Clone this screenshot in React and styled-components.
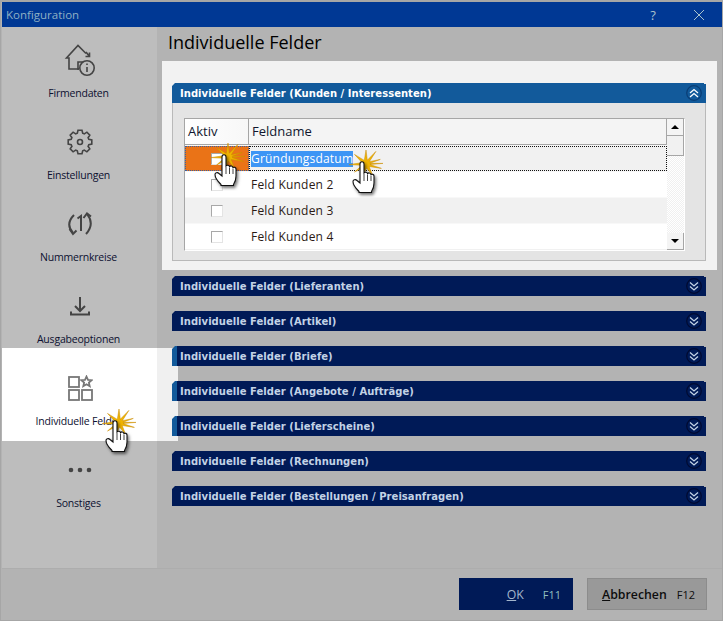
import React from "react";
import styled, { createGlobalStyle } from "styled-components";

const Global = createGlobalStyle`
    html, body { margin: 0; padding: 0; background: #b3b3b3; }
    * { box-sizing: border-box; }
`;

const Window = styled.div`
    position: relative;
    width: 723px;
    height: 621px;
    display: flex;
    flex-direction: column;
    overflow: hidden;
    background: #b3b3b3;
    border: 1px solid #a6a6a6;
    border-top-width: 2px;
    font-family: "Open Sans", "Liberation Sans", sans-serif;
`;

const TitleBar = styled.div`
    height: 25px;
    flex: none;
    margin-left: 1px;
    padding-left: 4px;
    display: flex;
    align-items: center;
    background: #003894;
    color: #8fb0c4;
    font-size: 11.5px;
`;

const TitleText = styled.span`
    flex: 1;
`;

const TitleButton = styled.span`
    width: 46px;
    display: flex;
    justify-content: center;
    color: #a9c3cc;
    font-size: 13px;
`;

const Body = styled.div`
    flex: 1;
    display: flex;
    min-height: 0;
`;

const Sidebar = styled.div`
    width: 155px;
    flex: none;
    padding-top: 1px;
    margin-left: 1px;
    background: #bdbdbd;
`;

const NavItem = styled.div`
    height: 82px;
    display: flex;
    flex-direction: column;
    align-items: center;
    color: #0c1030;
    font-size: 10.5px;
    letter-spacing: -0.2px;
`;

const NavIcon = styled.div`
    height: 40px;
    margin-top: 12px;
    display: flex;
    align-items: center;
    justify-content: center;
`;

const NavLabel = styled.div`
    margin: ${(p) => p.$top}px 2px 0 0;
    line-height: 16px;
`;

const ActiveNav = styled.div`
    position: absolute;
    left: 1px;
    top: 346px;
    width: 176px;
    height: 93px;
    background: linear-gradient(to right, #fff 155px, #f0f0f0 155px);
    display: flex;
    flex-direction: column;
    align-items: center;
    padding: 27px 21px 0 0;
    color: #0c1030;
    font-size: 10.5px;
    letter-spacing: -0.2px;
`;

const Main = styled.div`
    position: relative;
    z-index: 1;
    flex: 1;
    min-width: 0;
    padding-left: 5px;
`;

const Heading = styled.h1`
    margin: 0;
    height: 34px;
    padding: 1px 0 0 6px;
    line-height: 28px;
    font-size: 18px;
    font-weight: 400;
    color: #000;
`;

const Panel = styled.div`
    width: 555px;
    height: 209px;
    padding: 22px 11px 0 10px;
    background: #f2f2f2;
    margin-bottom: 6px;
`;

const AccordionHead = styled.div`
    height: 20px;
    padding: 0 4px 0 8px;
    display: flex;
    align-items: center;
    justify-content: space-between;
    background: ${(p) =>
        p.$open
            ? "#125a9b"
            : p.$lit
              ? "linear-gradient(to right, #125a9b 5px, #001a57 5px)"
              : "#001a57"};
    color: ${(p) => (p.$open ? "#fff" : "#c3d3e6")};
    font-family: "DejaVu Sans", Verdana, sans-serif;
    font-size: 10px;
    letter-spacing: 0.04px;
    font-weight: 700;
    clip-path: polygon(3px 0, calc(100% - 2px) 0, calc(100% - 2px) 1px, 100% 1px, 100% 100%, 0 100%, 0 3px);
`;

const Collapsed = styled.div`
    width: 534px;
    margin: 0 0 15px 10px;
`;

const AccordionBody = styled.div`
    height: 158px;
    padding: 15px 21px 0 11px;
    background: #e4e4e4;
    border: 1px solid #b9b9b9;
    border-top: 0;
`;

const Grid = styled.div`
    width: 501px;
    height: 133px;
    display: flex;
    border-top: 1px solid #a6a6a6;
    border-left: 1px solid #a6a6a6;
    border-right: 1px solid #fff;
    border-bottom: 1px solid #fff;
    background: #fff;
`;

const GridMain = styled.div`
    flex: 1;
    min-width: 0;
    display: flex;
    flex-direction: column;
    background: #f1f1f1;
`;

const HeaderRow = styled.div`
    height: 26px;
    flex: none;
    display: flex;
    align-items: center;
    background: linear-gradient(to right, #fff 0, #f4f4f4 90px);
    border-bottom: 1px solid #a6a6a6;
    border-right: 1px solid #a6a6a6;
    color: #10162e;
    font-size: 13px;
`;

const HeaderCell = styled.div`
    width: ${(p) => p.$w}px;
    height: 100%;
    display: flex;
    align-items: center;
    padding: 0 0 2px ${(p) => p.$pad}px;
    border-right: ${(p) => (p.$divider ? "1px solid #a6a6a6" : "0")};
`;

const Row = styled.div`
    height: 26px;
    flex: none;
    display: flex;
    align-items: center;
    background: ${(p) => (p.$alt ? "#f1f1f1" : "#fff")};
    color: #2b1a14;
    font-size: 12px;
    letter-spacing: 0.2px;
    border-top: 1px solid #f8f8f8;
`;

const CheckCell = styled.div`
    width: 64px;
    height: 100%;
    flex: none;
    display: flex;
    align-items: center;
    justify-content: center;
    background: ${(p) => (p.$active ? "#ea7317" : "transparent")};
    outline: ${(p) => (p.$active ? "1px dotted #3a5fa0" : "0")};
    outline-offset: -1px;
`;

const Check = styled.span`
    width: 12px;
    height: 12px;
    display: block;
    background: #fff;
    border-top: 1px solid #a8a8a8;
    border-left: 1px solid #a8a8a8;
    border-right: 1px solid #e4e4e4;
    border-bottom: 1px solid #e4e4e4;
`;

const NameCell = styled.div`
    flex: 1;
    height: 100%;
    display: flex;
    align-items: center;
    padding-left: ${(p) => (p.$active ? 1 : 2)}px;
    border: ${(p) => (p.$active ? "1px dotted #111" : "0")};
`;

const Selected = styled.span`
    background: #3d95f5;
    color: #fff;
    line-height: 16px;
`;

const ScrollBar = styled.div`
    width: 17px;
    flex: none;
    display: flex;
    flex-direction: column;
    background: repeating-conic-gradient(#f0f0f0 0 25%, #fff 0 50%) 0 0 / 2px 2px;
`;

const ScrollButton = styled.div`
    height: 17px;
    flex: none;
    display: flex;
    align-items: center;
    justify-content: center;
    background: #f4f4f4;
    border-right: 1px solid #a6a6a6;
    border-bottom: 1px solid #a6a6a6;
`;

const ScrollThumb = styled.div`
    height: 20px;
    flex: none;
    background: #f1f1f1;
    border-right: 1px solid #a6a6a6;
    border-bottom: 1px solid #a6a6a6;
`;

const ScrollTrack = styled.div`
    flex: 1;
`;

const Arrow = styled.span`
    width: 0;
    height: 0;
    border-left: 4px solid transparent;
    border-right: 4px solid transparent;
    border-${(p) => (p.$down ? "top" : "bottom")}: 4px solid #000;
`;

const Footer = styled.div`
    height: 52px;
    flex: none;
    margin-left: 1px;
    padding: 9px 15px 0 0;
    display: flex;
    justify-content: flex-end;
    gap: 14px;
    border-top: 1px solid #adadad;
`;

const Button = styled.div`
    width: ${(p) => p.$w}px;
    height: 32px;
    display: flex;
    align-items: center;
    justify-content: flex-end;
    gap: ${(p) => p.$gap}px;
    padding-right: ${(p) => p.$pr}px;
    background: ${(p) => (p.$primary ? "#001a57" : "#999")};
    border: ${(p) => (p.$primary ? "0" : "1px solid #8c8c8c")};
    color: ${(p) => (p.$primary ? "#a3b6cc" : "#0d0d0d")};
    font-size: 12.3px;
    font-weight: ${(p) => (p.$primary ? 400 : 600)};
`;

const FKey = styled.span`
    font-size: 11px;
    font-weight: 400;
    color: ${(p) => (p.$primary ? "#8fc0c0" : "#0d0d0d")};
`;

const Hand = styled.svg`
    position: absolute;
    z-index: 2;
    left: ${(p) => p.$x}px;
    top: ${(p) => p.$y}px;
    pointer-events: none;
`;

const stroke = { fill: "none", stroke: "#444", strokeWidth: 1.6, strokeLinejoin: "miter" };

function gearPath() {
    // 8 Zähne rund um den Mittelpunkt
    const pts = [];
    for (let i = 0; i < 8; i++) {
        const a = (i * Math.PI) / 4;
        [[-0.3, 9.2], [-0.17, 12], [0.17, 12], [0.3, 9.2]].forEach(([off, r]) => {
            pts.push(`${(14 + r * Math.sin(a + off)).toFixed(1)} ${(14 - r * Math.cos(a + off)).toFixed(1)}`);
        });
    }
    return `M${pts.join("L")}Z`;
}

function starPoints() {
    const rays = [
        [0, 14],
        [38, 16],
        [72, 15],
        [88, 17],
        [106, 16],
        [150, 13],
        [195, 13],
        [235, 14],
        [268, 17],
        [310, 15],
    ];
    const pts = [];
    rays.forEach(([deg, r], i) => {
        const next = i + 1 < rays.length ? rays[i + 1][0] : 360;
        const mid = (deg + next) / 2;
        const a = (deg * Math.PI) / 180;
        const m = (mid * Math.PI) / 180;
        pts.push(`${(21 + r * Math.sin(a)).toFixed(1)},${(14 - r * Math.cos(a)).toFixed(1)}`);
        pts.push(`${(21 + 4 * Math.sin(m)).toFixed(1)},${(14 - 4 * Math.cos(m)).toFixed(1)}`);
    });
    return pts.join(" ");
}

function HouseIcon() {
    return (
        <svg width="32" height="32" viewBox="0 0 32 32" {...stroke}>
            <path d="M15 25H5V14H2.500L14 1.500 22 9.500" />
            <path d="M15 25H14V18H19" />
            <path d="M22 8l3.500 4.500M25.500 8.500v4h-4" />
            <circle cx="23" cy="24" r="7.200" />
            <path d="M23 23v5M23 19.500v1.500" />
        </svg>
    );
}

function GearIcon() {
    return (
        <svg width="28" height="28" viewBox="0 0 28 28" {...stroke}>
            <path d={gearPath()} />
            <circle cx="14" cy="14" r="2.500" />
        </svg>
    );
}

function CounterIcon() {
    return (
        <svg width="28" height="28" viewBox="0 0 28 28" fill="none" stroke="#444" strokeWidth="2">
            <path d="M8 5Q-1 14 7 23" />
            <path d="M3.500 19l3.500 5 3.500-3.500" />
            <path d="M20 24Q29 14 21 4" />
            <path d="M17.500 8L21 3.500 25 6.500" />
            <path d="M11.500 8.500L15 6V21" />
        </svg>
    );
}

function DownloadIcon() {
    return (
        <svg width="24" height="24" viewBox="0 0 24 24" fill="none" stroke="#444" strokeWidth="2">
            <path d="M12 3v14M7 12l5 5 5-5" />
            <path d="M3 17.500v3h18v-3" />
        </svg>
    );
}

function FieldsIcon() {
    return (
        <svg width="26" height="26" viewBox="0 0 26 26" fill="none" stroke="#777" strokeWidth="1.800">
            <rect x="2" y="2" width="10" height="10" />
            <rect x="2" y="15" width="10" height="10" />
            <rect x="15" y="15" width="10" height="10" />
            <path d="M19.500 1.500l1.500 3.300 3.700.4-2.800 2.400.8 3.600-3.200-1.900-3.200 1.900.8-3.600-2.800-2.400 3.700-.4z" />
        </svg>
    );
}

function DotsIcon() {
    return (
        <svg width="24" height="6" viewBox="0 0 24 6" fill="#444">
            <circle cx="3" cy="3" r="2.300" />
            <circle cx="12" cy="3" r="2.300" />
            <circle cx="21" cy="3" r="2.300" />
        </svg>
    );
}

function ToggleIcon({ open }) {
    const color = open ? "#fff" : "#c3d3e6";
    const d = open ? "M4 8l4-3.500 4 3.500M4 12l4-3.500 4 3.500" : "M4 4.500l4 3.500 4-3.500M4 8.500l4 3.500 4-3.500";
    return (
        <svg width="16" height="16" viewBox="0 0 16 16" fill="none">
            <circle cx="8" cy="8" r="7.300" stroke={open ? "#0a3d75" : "#000a30"} strokeWidth="1.200" />
            <path d={d} stroke={color} strokeWidth="1.300" />
        </svg>
    );
}

function HandCursor({ x, y }) {
    // Klick-Markierung aus dem Handbuch: Stern plus Hand
    return (
        <Hand $x={x} $y={y} width="46" height="52" viewBox="0 0 46 52">
            <defs>
                <filter id="handShadow" x="-30%" y="-30%" width="160%" height="160%">
                    <feDropShadow dx="1.500" dy="2" stdDeviation="1.500" floodColor="#000" floodOpacity="0.55" />
                </filter>
            </defs>
            <polygon points={starPoints()} fill="#f0b400" stroke="#c98a00" strokeWidth=".5" />
            <path
                d="M15 14c0-3 4-3 4 0v9c1-1 3-1 3.500.5 1-1 3-.8 3.500 1 1-.5 3-.3 3 1.500v7c0 4-1.500 7-2.500 8.500v1H14v-1c-2-2-6-7-6-10 0-2 2.500-2.500 4-1l3 2.500z"
                fill="#fff"
                stroke="#111"
                strokeWidth="1.100"
                filter="url(#handShadow)"
            />
            <path d="M19 24v7M22.500 24.500V31M26 25.500V31" stroke="#111" strokeWidth=".8" fill="none" />
        </Hand>
    );
}

const navItems = [
    { label: "Firmendaten", icon: <HouseIcon /> },
    { label: "Einstellungen", icon: <GearIcon /> },
    { label: "Nummernkreise", icon: <CounterIcon /> },
    { label: "Ausgabeoptionen", icon: <DownloadIcon /> },
    { label: "", icon: null },
    { label: "Sonstiges", icon: <DotsIcon /> },
];

const collapsed = [
    { name: "Lieferanten" },
    { name: "Artikel" },
    { name: "Briefe", lit: true },
    { name: "Angebote / Aufträge", lit: true },
    { name: "Lieferscheine", lit: true },
    { name: "Rechnungen" },
    { name: "Bestellungen / Preisanfragen" },
];

const rows = ["Feld Kunden 2", "Feld Kunden 3", "Feld Kunden 4"];

export default function App() {
    return (
        <Window>
            <Global />
            <TitleBar>
                <TitleText>Konfiguration</TitleText>
                <TitleButton>?</TitleButton>
                <TitleButton>
                    <svg width="12" height="12" viewBox="0 0 12 12" stroke="#a9c3cc" strokeWidth="1">
                        <path d="M1 1l10 10M11 1L1 11" />
                    </svg>
                </TitleButton>
            </TitleBar>
            <Body>
                <Sidebar>
                    {navItems.map((item, i) => (
                        <NavItem key={i}>
                            <NavIcon>{item.icon}</NavIcon>
                            <NavLabel $top={5}>{item.label}</NavLabel>
                        </NavItem>
                    ))}
                </Sidebar>
                <Main>
                    <Heading>Individuelle Felder</Heading>
                    <Panel>
                        <AccordionHead $open>
                            <span>Individuelle Felder (Kunden / Interessenten)</span>
                            <ToggleIcon open />
                        </AccordionHead>
                        <AccordionBody>
                            <Grid>
                                <GridMain>
                                    <HeaderRow>
                                        <HeaderCell $w={64} $pad={3} $divider>
                                            Aktiv
                                        </HeaderCell>
                                        <HeaderCell $w={200} $pad={3}>
                                            Feldname
                                        </HeaderCell>
                                    </HeaderRow>
                                    <Row $alt>
                                        <CheckCell $active>
                                            <Check />
                                        </CheckCell>
                                        <NameCell $active>
                                            <Selected>Gründungsdatum</Selected>
                                        </NameCell>
                                    </Row>
                                    {rows.map((name, i) => (
                                        <Row key={name} $alt={i % 2 === 1}>
                                            <CheckCell>
                                                <Check />
                                            </CheckCell>
                                            <NameCell>{name}</NameCell>
                                        </Row>
                                    ))}
                                </GridMain>
                                <ScrollBar>
                                    <ScrollButton>
                                        <Arrow />
                                    </ScrollButton>
                                    <ScrollThumb />
                                    <ScrollTrack />
                                    <ScrollButton>
                                        <Arrow $down />
                                    </ScrollButton>
                                </ScrollBar>
                            </Grid>
                        </AccordionBody>
                    </Panel>
                    {collapsed.map((item) => (
                        <Collapsed key={item.name}>
                            <AccordionHead $lit={item.lit}>
                                <span>Individuelle Felder ({item.name})</span>
                                <ToggleIcon />
                            </AccordionHead>
                        </Collapsed>
                    ))}
                </Main>
            </Body>
            <Footer>
                <Button $primary $w={114} $gap={19} $pr={12}>
                    <span>
                        <u>O</u>K
                    </span>
                    <FKey $primary>F11</FKey>
                </Button>
                <Button $w={120} $gap={10} $pr={11}>
                    <span>
                        <u>A</u>bbrechen
                    </span>
                    <FKey>F12</FKey>
                </Button>
            </Footer>
            <ActiveNav>
                <FieldsIcon />
                <NavLabel $top={12}>Individuelle Felder</NavLabel>
            </ActiveNav>
            <HandCursor x={206} y={141} />
            <HandCursor x={344} y={148} />
            <HandCursor x={97} y={407} />
        </Window>
    );
}
